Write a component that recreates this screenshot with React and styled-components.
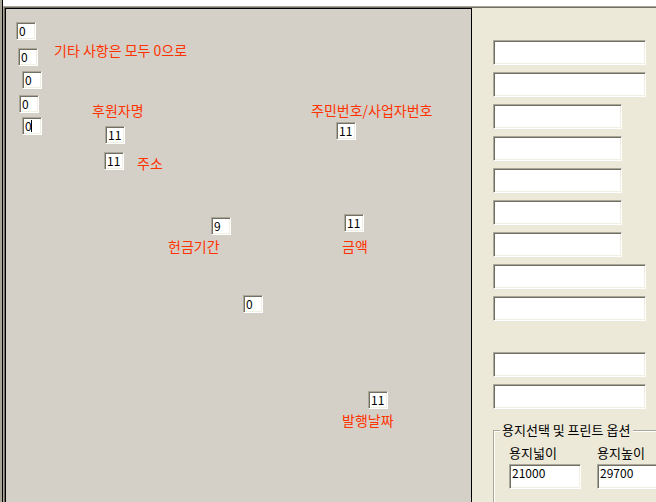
import React from "react";
import styled, { createGlobalStyle } from "styled-components";

const GlobalStyle = createGlobalStyle`
  *, *::before, *::after { box-sizing: border-box; }
  body {
    margin: 0;
    overflow: hidden;
    background: #ece9d8;
    color: #000;
    font: 13px/16px "Noto Sans CJK KR", sans-serif;
  }
`;

const Window = styled.div`
  display: flex;
  height: 100vh;
  border-left: 2px solid #aca899;
`;

const Client = styled.div`
  display: flex;
  flex-direction: column;
  flex: 1;
  min-width: 0;
  border-left: 1px solid #000;
`;

const Strip = styled.div`
  flex: none;
  height: 6px;
  background: #fff;
`;

const Workspace = styled.main`
  display: flex;
  flex: 1;
  min-height: 0;
  border: 0 solid #aca899;
  border-width: 1px 0 0 1px;
  box-shadow: inset 1px 1px #716f64;
  padding: 1px 0 0 1px;
`;

const Canvas = styled.section`
  position: relative;
  flex: 1;
  min-width: 0;
  overflow: hidden;
  border: 1px solid #000;
  border-bottom: 0;
  background: #d4d0c8;
`;

const Field = styled.input.attrs({ type: "text" })`
  display: block;
  flex: none;
  width: ${(p) => p.$width || "100%"};
  height: 25px;
  margin: 0;
  padding: 0 1px 8px 2px;
  border: 1px solid;
  border-color: #aca899 #fff #fff #aca899;
  border-radius: 0;
  outline: 0;
  background: #fff;
  box-shadow: inset 1px 1px #716f64, inset -1px -1px #f1efe2;
  color: #000;
  font: 12px/14px "Noto Sans CJK KR", sans-serif;
`;

const PlacedField = styled(Field)`
  position: absolute;
  left: ${(p) => p.$x}px;
  top: ${(p) => p.$y}px;
  width: 20px;
  height: 18px;
  padding: 0 1px 2px 2px;
`;

const PlacedLabel = styled.label`
  position: absolute;
  left: ${(p) => p.$x}px;
  top: ${(p) => p.$y}px;
  color: #ff3300;
  font-size: 14px;
  line-height: 18px;
  white-space: nowrap;
`;

const Caret = styled.span`
  position: absolute;
  left: 25px;
  top: 111px;
  width: 1px;
  height: 12px;
  background: #000;
`;

const SidePanel = styled.aside`
  flex: none;
  width: 184px;
  overflow: hidden;
  padding: 32px 10px 0 21px;
`;

const FieldStack = styled.div`
  display: flex;
  flex-direction: column;
  gap: 7px;
  margin-bottom: ${(p) => p.$after}px;
`;

const PaperOptions = styled.fieldset`
  width: 184px;
  min-width: 0;
  margin: 0;
  padding: 7px 0 40px 15px;
  border: 1px solid #aca899;
  box-shadow: inset 1px 1px #fff;
`;

const Legend = styled.legend`
  margin-left: -9px;
  padding: 0 3px 0 2px;
  background: #ece9d8;
  white-space: nowrap;
`;

const OptionRow = styled.div`
  display: flex;
  gap: 16px;
`;

const Option = styled.div`
  display: flex;
  flex: none;
  flex-direction: column;
  gap: 3px;
`;

const placedFields = [
  { id: "etc1", x: 10, y: 13, value: "0", name: "기타 1" },
  { id: "etc2", x: 12, y: 39, value: "0", name: "기타 2" },
  { id: "etc3", x: 16, y: 62, value: "0", name: "기타 3" },
  { id: "etc4", x: 13, y: 86, value: "0", name: "기타 4" },
  { id: "etc5", x: 16, y: 108, value: "0", name: "기타 5" },
  { id: "sponsor", x: 99, y: 117, value: "11" },
  { id: "address", x: 98, y: 143, value: "11" },
  { id: "number", x: 330, y: 113, value: "11" },
  { id: "amount", x: 338, y: 205, value: "11" },
  { id: "period", x: 205, y: 208, value: "9" },
  { id: "etc6", x: 237, y: 286, value: "0", name: "기타 6" },
  { id: "issued", x: 362, y: 382, value: "11" },
];

const placedLabels = [
  { target: "etc1", x: 48, y: 32, text: "기타 사항은 모두 0으로" },
  { target: "sponsor", x: 86, y: 92, text: "후원자명" },
  { target: "number", x: 305, y: 92, text: "주민번호/사업자번호" },
  { target: "address", x: 131, y: 145, text: "주소" },
  { target: "period", x: 162, y: 228, text: "헌금기간" },
  { target: "amount", x: 336, y: 228, text: "금액" },
  { target: "issued", x: 336, y: 402, text: "발행날짜" },
];

const mainWidths = [
  "100%", "100%", "129px", "129px", "129px", "129px", "129px", "100%", "100%",
];

export default function App() {
  return (
    <>
      <GlobalStyle />
      <Window>
        <Client>
          <Strip />
          <Workspace>
            <Canvas>
              {placedFields.map((f) => (
                <PlacedField
                  key={f.id}
                  id={f.id}
                  aria-label={f.name}
                  defaultValue={f.value}
                  $x={f.x}
                  $y={f.y}
                />
              ))}
              {placedLabels.map((l) => (
                <PlacedLabel key={l.target} htmlFor={l.target} $x={l.x} $y={l.y}>
                  {l.text}
                </PlacedLabel>
              ))}
              <Caret />
            </Canvas>
            <SidePanel>
              <FieldStack $after={31}>
                {mainWidths.map((width, i) => (
                  <Field key={i} aria-label={`항목 ${i + 1}`} $width={width} />
                ))}
              </FieldStack>
              <FieldStack $after={13}>
                <Field aria-label="항목 10" />
                <Field aria-label="항목 11" />
              </FieldStack>
              <PaperOptions>
                <Legend>용지선택 및 프린트 옵션</Legend>
                <OptionRow>
                  <Option>
                    <label htmlFor="paper-width">용지넓이</label>
                    <Field id="paper-width" defaultValue="21000" $width="72px" />
                  </Option>
                  <Option>
                    <label htmlFor="paper-height">용지높이</label>
                    <Field id="paper-height" defaultValue="29700" $width="72px" />
                  </Option>
                </OptionRow>
              </PaperOptions>
            </SidePanel>
          </Workspace>
        </Client>
      </Window>
    </>
  );
}
